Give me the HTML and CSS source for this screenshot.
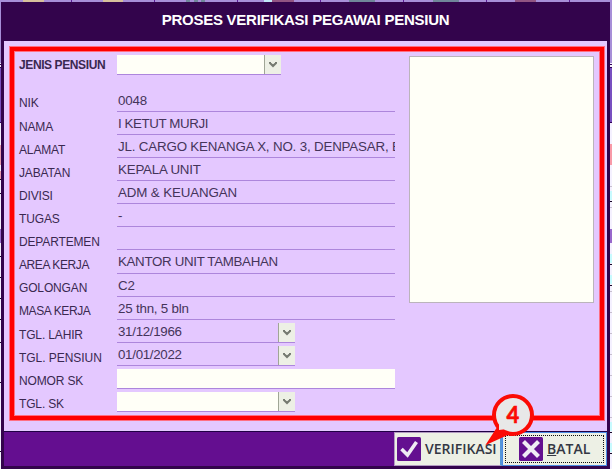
FILE: index.html
```html
<!DOCTYPE html>
<html lang="id">
<head>
<meta charset="utf-8">
<title>Proses Verifikasi Pegawai Pensiun</title>
<link rel="stylesheet" href="styles.css">
</head>
<body>
<div class="backdrop" aria-hidden="true">
<svg width="612" height="469" shape-rendering="crispEdges">
<rect width="612" height="469" fill="#f4f0ff"/>
<rect width="612" height="63" fill="#a78fd8"/>
<path d="M71.500 0v2M154.500 0v2M237.500 0v2M320.500 0v2M403.500 0v2M486.500 0v2M569.500 0v2" stroke="#5a1c96"/>
<path d="M23 1h21M103 1h20" stroke="#d8c09c" stroke-width="2"/>
<path d="M186 1h4M194 1h4M201 1h4M349 1h26M433 1h26" stroke="#70869a" stroke-width="2"/>
<path d="M264 1h8" stroke="#c0e8f8" stroke-width="2"/>
<path d="M272 1h22M515 1h21" stroke="#925582" stroke-width="2"/>
<path d="M0 68h612v54H0z" fill="#7850c0"/>
<path d="M0 64.500h612M0 67.500h612M0 122.500h612" stroke="#300058"/>
<path d="M606 144h6v21h-6z" fill="#f89aa8"/>
<path d="M0 145h3v20H0zM0 171h3v8H0z" fill="#e89aac"/>
<path d="M0 229h612v14H0z" fill="#9868cc"/>
<path d="M0 179.500h3M0 193.500h3M0 256.500h3M0 277.500h3M0 298.500h3M0 319.500h3M0 342.500h3M0 382.500h3M0 451.500h3M609 201.500h3M609 264.500h3M609 285.500h3M609 432.500h3M609 453.500h3" stroke="#180828"/>
<path d="M609 191h3v9h-3zM609 254h3v9h-3zM609 275h3v9h-3zM609 422h3v9h-3zM609 443h3v9h-3z" fill="#c8faff"/>
<path d="M609 186.500h3M609 207.500h3M609 291.500h3M609 312.500h3M609 333.500h3M609 354.500h3M609 375.500h3M609 396.500h3M609 417.500h3" stroke="#c8c0d0"/>
</svg>
</div>
<main class="dialog">
<header class="title">PROSES VERIFIKASI PEGAWAI PENSIUN</header>
<section class="body">
<div class="frame">
<div class="form">
<div class="labels">
<div class="label strong">JENIS PENSIUN</div>
<div class="label nik">NIK</div>
<div class="label">NAMA</div>
<div class="label">ALAMAT</div>
<div class="label">JABATAN</div>
<div class="label">DIVISI</div>
<div class="label">TUGAS</div>
<div class="label">DEPARTEMEN</div>
<div class="label area">AREA KERJA</div>
<div class="label">GOLONGAN</div>
<div class="label area">MASA KERJA</div>
<div class="label lahir">TGL. LAHIR</div>
<div class="label tgl">TGL. PENSIUN</div>
<div class="label">NOMOR SK</div>
<div class="label">TGL. SK</div>
</div>
<div class="fields">
<div class="field combo white first"><span></span><i class="arrow"><svg width="8" height="7"><path d="M1 1v1l3 3 3-3V1"/></svg></i></div>
<div class="field nikval"><span>0048</span></div>
<div class="field"><span class="name">I KETUT MURJI</span></div>
<div class="field"><span class="address">JL. CARGO KENANGA X, NO. 3, DENPASAR, B</span></div>
<div class="field"><span>KEPALA UNIT</span></div>
<div class="field"><span class="division">ADM &amp; KEUANGAN</span></div>
<div class="field"><span>-</span></div>
<div class="field"><span></span></div>
<div class="field tall"><span class="unit">KANTOR UNIT TAMBAHAN</span></div>
<div class="field"><span>C2</span></div>
<div class="field"><span>25 thn, 5 bln</span></div>
<div class="field combo"><span class="date">31/12/1966</span><i class="arrow"><svg width="8" height="7"><path d="M1 1v1l3 3 3-3V1"/></svg></i></div>
<div class="field combo"><span class="date">01/01/2022</span><i class="arrow"><svg width="8" height="7"><path d="M1 1v1l3 3 3-3V1"/></svg></i></div>
<div class="field white"><span></span></div>
<div class="field combo white"><span></span><i class="arrow"><svg width="8" height="7"><path d="M1 1v1l3 3 3-3V1"/></svg></i></div>
</div>
<div class="photo"></div>
</div>
</div>
</section>
<footer class="actions">
<button class="button verify"><svg width="24" height="24"><rect width="24" height="24" rx="1.500" fill="#641090"/><path d="M4.500 12l6 6L19.500 5" fill="none" stroke="#f0ecf4" stroke-width="3.600"/></svg><span>VERIFIKASI</span></button>
<button class="button cancel"><svg width="24" height="24"><rect width="24" height="24" rx="1.500" fill="#641090"/><path d="M4.500 4.500l15 15M19.500 4.500l-15 15" fill="none" stroke="#f0ecf4" stroke-width="4.200"/></svg><span><u>B</u>ATAL</span></button>
</footer>
</main>
<svg class="callout" width="60" height="60"><path d="M18 35L7 52L29 42z" fill="#fb0b05" stroke="#fb0b05" stroke-width="2"/><circle cx="32" cy="24" r="19" fill="#e8e8e8" stroke="#fb0b05" stroke-width="4"/><path d="M18 32L18 39L26 38z" fill="#e8e8e8"/><text x="32" y="32">4</text></svg>
</body>
</html>
```

FILE: styles.css
```css
* { box-sizing: border-box; }
body { margin: 0; width: 612px; height: 469px; overflow: hidden; position: relative; font-family: "Liberation Sans", Arial, sans-serif; color: #3a2850; }
.backdrop { position: absolute; inset: 0; }
.backdrop svg, .callout { display: block; }
.dialog { position: relative; width: 609px; height: 467px; margin: 2px 0 0 1px; padding: 0 3px 3px; background: #33044c; display: flex; flex-direction: column; }
.title { height: 39px; padding-top: 9px; text-align: center; color: #fff; font-size: 15px; line-height: 18px; font-weight: bold; letter-spacing: -0.25px; }
.body { height: 390px; padding: 6px 3px 11px 6px; background: #e4c8ff; }
.frame { height: 373px; border: 4px solid #f00; box-shadow: 0 0 0 1px #ff6f83, inset 0 0 0 1px #ff6f83; }
.form { display: flex; padding-left: 5px; }
.labels { width: 98px; flex: none; padding-top: 6px; }
.label { height: 23px; font-size: 12px; line-height: 16px; white-space: nowrap; letter-spacing: -0.15px; }
.label.strong { height: 16px; font-weight: bold; letter-spacing: -0.4px; }
.label.nik { margin-top: 22px; height: 24px; }
.label.area { letter-spacing: -0.4px; }
.label.lahir { margin-top: 1px; }
.label.tgl { letter-spacing: -0.05px; }
.fields { width: 278px; flex: none; }
.field { height: 20px; margin-top: 3px; border-bottom: 1px solid #ad86dc; display: flex; font-size: 13.33px; line-height: 18px; letter-spacing: -0.2px; color: #44345a; }
.field span { flex: 1; min-width: 0; padding-left: 1px; overflow: hidden; white-space: nowrap; }
.field .name { letter-spacing: -0.4px; }
.field .address { letter-spacing: -0.17px; }
.field .division { letter-spacing: -0.12px; }
.field .unit { letter-spacing: -0.33px; }
.field .date { letter-spacing: -0.3px; }
.field.first { width: 164px; margin-top: 4px; }
.field.nikval { margin-top: 17px; }
.field.tall { height: 21px; }
.combo { width: 178px; }
.white { background: #fffff7; }
.arrow { width: 17px; background: #edf0e5; border-left: 1px solid #a0a696; display: flex; align-items: center; justify-content: center; }
.arrow path { fill: none; stroke: #757a70; stroke-width: 2; }
.photo { width: 185px; height: 247px; margin: 5px 0 0 14px; border: 1px solid #bbb4bb; background: #fffff7; }
.actions { height: 35px; padding-left: 390px; border-top: 1px solid #200044; background: #640e90; display: flex; }
.button { height: 34px; border: 1px solid #b39ac2; background: #edf0e5; display: flex; align-items: center; flex: none; margin: 0; padding: 0 2px; gap: 4px; font: 600 14px "Open Sans", sans-serif; color: #343743; white-space: nowrap; }
.button svg { flex: none; }
.button span { margin-top: -2px; }
.verify { width: 108px; border-right: 2px solid #5697d8; }
.cancel { width: 105px; border: 1px solid #4d8be4; outline: 1px dotted #111; outline-offset: -4px; padding-left: 16px; }
.callout { position: absolute; left: 481px; top: 391px; }
.callout text { font: bold 22px Lato, sans-serif; fill: #fb0b05; stroke: #fb0b05; stroke-width: 0.6px; text-anchor: middle; }
```
